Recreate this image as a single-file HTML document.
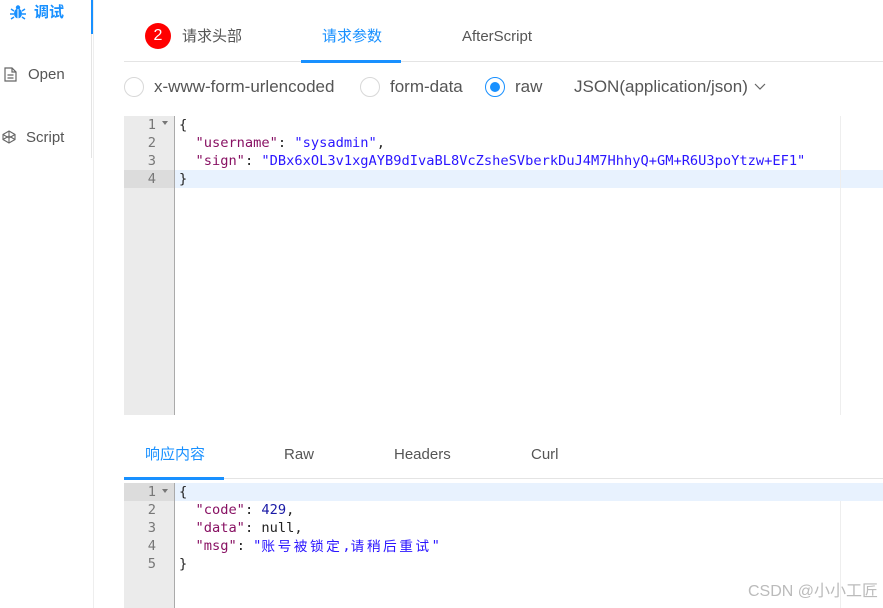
<!DOCTYPE html>
<html><head><meta charset="utf-8"><style>
*{margin:0;padding:0;box-sizing:border-box}
body{width:883px;height:608px;background:#fff;position:relative;overflow:hidden;font-family:"Liberation Sans","Noto Sans CJK SC",sans-serif;color:#555}
.abs{position:absolute;line-height:20px}
.side{font-size:15px;color:#555}
.mono{font-family:"DejaVu Sans Mono","Liberation Mono",monospace;font-size:13.7px;line-height:18px;white-space:pre}
.mono div{height:18px;overflow:visible}
.gut{background:#ebebeb;border-right:1px solid #aaa;text-align:right;color:#777}
.k{color:#881163}.s{color:#2a15ff}.n{color:#1a1aa6}.p{color:#222}
.cj{font-family:"WenQuanYi Zen Hei","Noto Sans CJK SC",sans-serif;letter-spacing:2.5px;line-height:16px;display:inline-block;height:18px;vertical-align:top}
.tab{font-size:15px;color:#555}
.radio{width:20px;height:20px;border-radius:50%;border:1px solid #d8d8d8}
</style></head><body>
<div class="abs" style="left:93px;top:0;width:1px;height:608px;background:#eee"></div>
<div class="abs" style="left:91px;top:0;width:2px;height:34px;background:#1890ff"></div>
<div class="abs" style="left:91px;top:34px;width:1px;height:124px;background:#e4e4e4"></div>
<svg class="abs" style="left:10px;top:4px" width="16" height="16" viewBox="0 0 16 16"><g fill="#1890ff"><ellipse cx="8" cy="9.5" rx="4" ry="5"/><circle cx="8" cy="3.5" r="2.2"/><path d="M1 5l3 2M15 5l-3 2M0 10h4M16 10h-4M1 15l3-2M15 15l-3-2" stroke="#1890ff" stroke-width="1.5"/></g><path d="M8 5v10" stroke="#fff" stroke-width="1"/></svg>
<div class="abs side" style="left:34px;top:3px;color:#1890ff;font-weight:bold">调试</div>
<svg class="abs" style="left:4px;top:67px" width="13" height="15" viewBox="0 0 13 15"><path d="M1 1h7l4 4v9H1z M8 1v4h4 M3.5 8h6 M3.5 11h6" fill="none" stroke="#666" stroke-width="1.2"/></svg>
<div class="abs side" style="left:28px;top:65px">Open</div>
<svg class="abs" style="left:2px;top:130px" width="14" height="14" viewBox="0 0 14 14"><path d="M7 1l6 3.5v5L7 13 1 9.5v-5z M1 4.5L7 8l6-3.5 M7 8v5 M1 9.5L7 6l6 3.5 M7 1v5" fill="none" stroke="#666" stroke-width="1.1"/></svg>
<div class="abs side" style="left:26px;top:128px">Script</div>
<div class="abs" style="left:145px;top:23px;width:26px;height:26px;border-radius:50%;background:#f00;color:#fff;font-size:16px;text-align:center;line-height:26px">2</div>
<div class="abs tab" style="left:182px;top:27px">请求头部</div>
<div class="abs tab" style="left:322px;top:27px;color:#1890ff">请求参数</div>
<div class="abs tab" style="left:462px;top:27px">AfterScript</div>
<div class="abs" style="left:124px;top:61px;width:759px;height:1px;background:#e4e4e4"></div>
<div class="abs" style="left:301px;top:60px;width:100px;height:3px;background:#1890ff"></div>
<div class="abs radio" style="left:124px;top:77px"></div>
<div class="abs" style="left:154px;top:77px;font-size:17px">x-www-form-urlencoded</div>
<div class="abs radio" style="left:360px;top:77px"></div>
<div class="abs" style="left:390px;top:77px;font-size:17px">form-data</div>
<div class="abs radio" style="left:485px;top:77px;border-color:#1890ff"><div style="position:absolute;left:4px;top:4px;width:10px;height:10px;border-radius:50%;background:#1890ff"></div></div>
<div class="abs" style="left:515px;top:77px;font-size:17px">raw</div>
<div class="abs" style="left:574px;top:77px;font-size:17px">JSON(application/json)</div>
<svg class="abs" style="left:754px;top:83px" width="12" height="8" viewBox="0 0 12 8"><path d="M1 1l5 5 5-5" fill="none" stroke="#666" stroke-width="1.2"/></svg>
<div class="abs gut mono" style="left:124px;top:116px;width:51px;height:299px;padding-right:18px">1
2
3
<span style="display:block;background:#dcdcdc;margin-right:-18px;padding-right:18px">4</span></div>
<div class="abs" style="left:162px;top:121px;border:3px solid transparent;border-top:4px solid #777;width:0;height:0"></div>
<div class="abs" style="left:175px;top:170px;width:708px;height:18px;background:#e8f2fe"></div>
<div class="abs" style="left:840px;top:116px;width:1px;height:299px;background:#eee"></div>
<div class="abs mono p" style="left:179px;top:116px"><div>{</div><div>  <span class="k">"username"</span>: <span class="s">"sysadmin"</span>,</div><div>  <span class="k">"sign"</span>: <span class="s">"DBx6xOL3v1xgAYB9dIvaBL8VcZsheSVberkDuJ4M7HhhyQ+GM+R6U3poYtzw+EF1"</span></div><div>}</div></div>
<div class="abs tab" style="left:145px;top:445px;color:#1890ff">响应内容</div>
<div class="abs tab" style="left:284px;top:445px">Raw</div>
<div class="abs tab" style="left:394px;top:445px">Headers</div>
<div class="abs tab" style="left:531px;top:445px">Curl</div>
<div class="abs" style="left:124px;top:478px;width:759px;height:1px;background:#e4e4e4"></div>
<div class="abs" style="left:124px;top:477px;width:100px;height:3px;background:#1890ff"></div>
<div class="abs gut mono" style="left:124px;top:483px;width:51px;height:125px;padding-right:18px"><span style="display:block;background:#dcdcdc;margin-right:-18px;padding-right:18px">1</span>2
3
4
5</div>
<div class="abs" style="left:162px;top:489px;border:3px solid transparent;border-top:4px solid #777;width:0;height:0"></div>
<div class="abs" style="left:175px;top:483px;width:708px;height:18px;background:#e8f2fe"></div>
<div class="abs" style="left:840px;top:501px;width:1px;height:107px;background:#eee"></div>
<div class="abs mono p" style="left:179px;top:483px"><div>{</div><div>  <span class="k">"code"</span>: <span class="n">429</span>,</div><div>  <span class="k">"data"</span>: null,</div><div>  <span class="k">"msg"</span>: <span class="s">"<span class="cj">账号被锁定</span>,<span class="cj">请稍后重试</span>"</span></div><div>}</div></div>
<div class="abs" style="left:748px;top:582px;font-size:16px;color:#bbb">CSDN @小小工匠</div>
</body></html>
